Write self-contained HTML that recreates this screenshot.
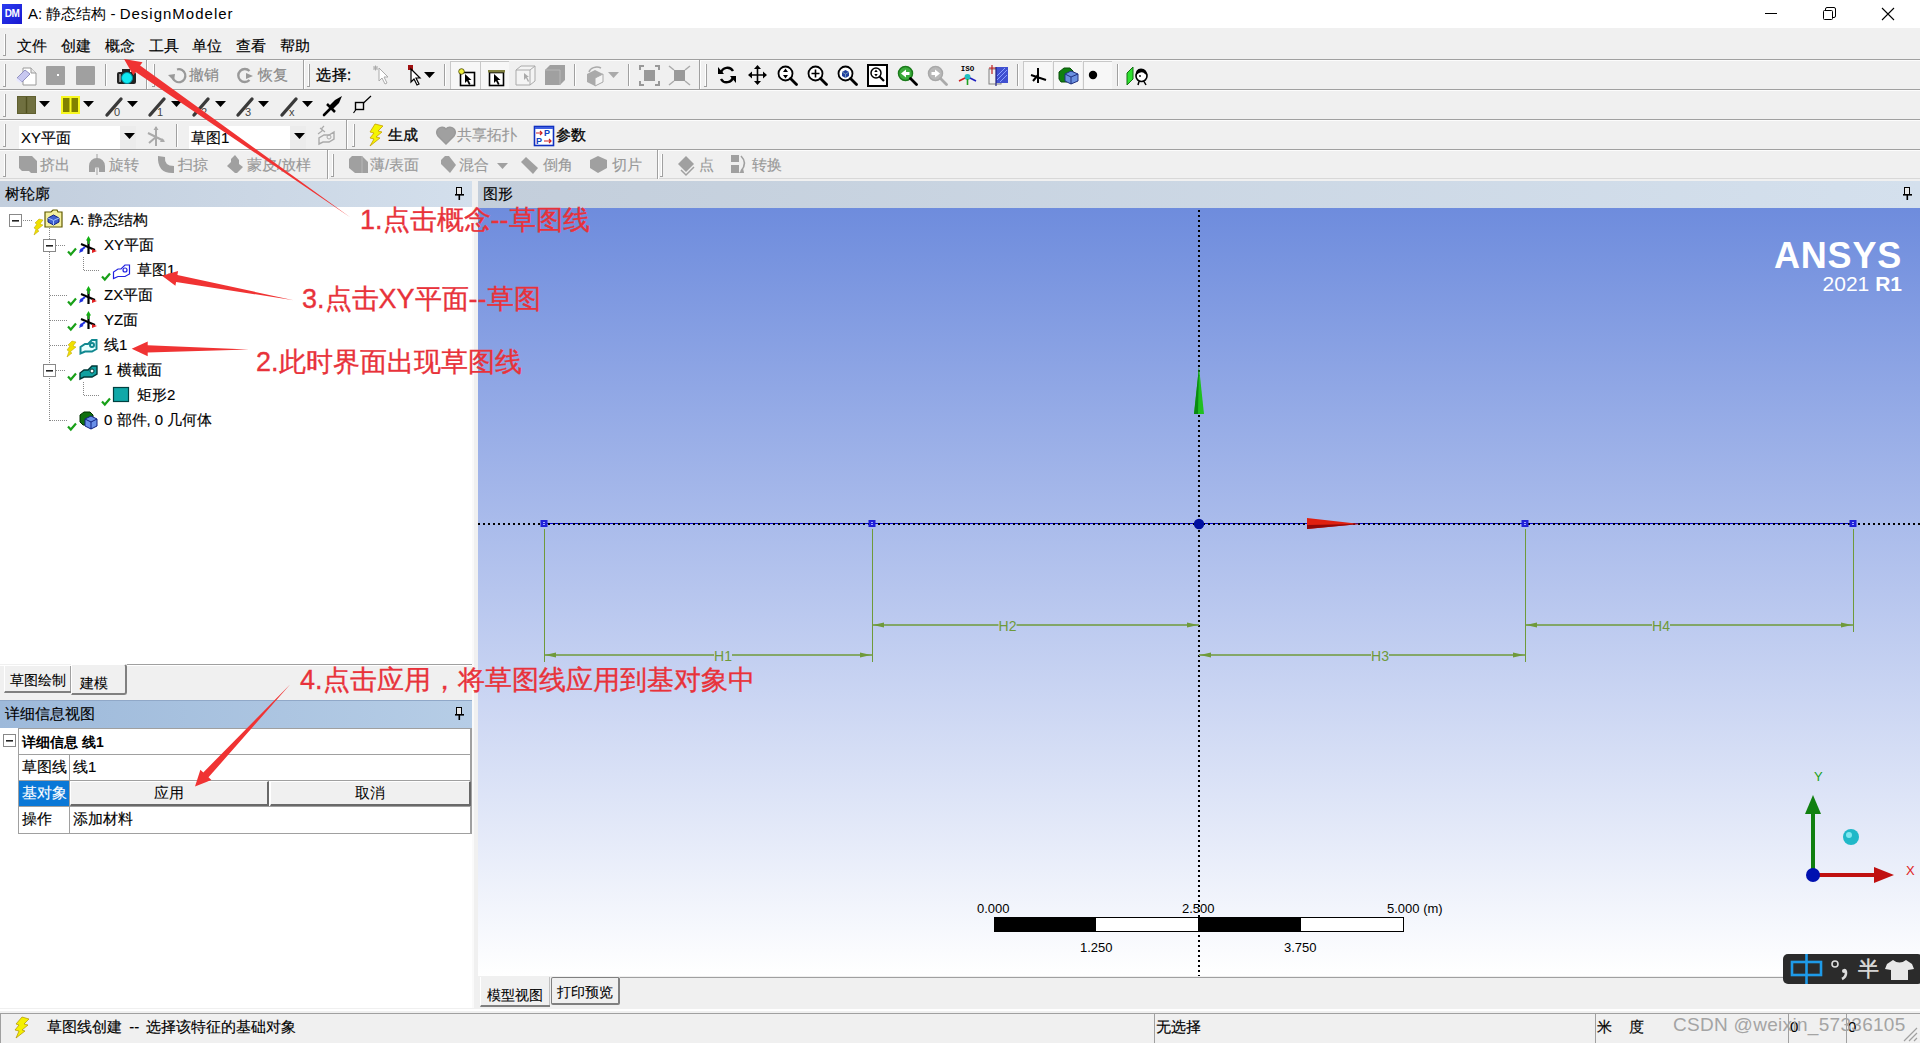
<!DOCTYPE html><html><head><meta charset="utf-8"><style>
html,body{margin:0;padding:0;}
body{width:1920px;height:1043px;position:relative;overflow:hidden;background:#f0f0f0;font-family:'Liberation Sans', sans-serif;}
div{box-sizing:border-box;}
</style></head><body>
<div style="position:absolute;left:0px;top:0px;width:1920px;height:28px;background:#fff"></div>
<div style="position:absolute;left:2px;top:4px;width:20px;height:20px;background:linear-gradient(135deg,#2a3cf0,#1818d0);color:#fff;font-size:10px;font-weight:bold;line-height:20px;text-align:center;letter-spacing:-0.5px">DM</div>
<div style="position:absolute;left:28px;top:4px;font-size:15px;line-height:19px;color:#000;white-space:nowrap;">A: 静态结构 - <span style="letter-spacing:1px">DesignModeler</span></div>
<svg style="position:absolute;left:1750px;top:0" width="170" height="28"><line x1="15" y1="13.5" x2="27" y2="13.5" stroke="#000" stroke-width="1"/><rect x="73.5" y="10.5" width="9" height="9" rx="1" fill="none" stroke="#000"/><path d="M75.5 10.5 V9 a1.5 1.5 0 0 1 1.5-1.5 H84 a1.5 1.5 0 0 1 1.5 1.5 V16 a1.5 1.5 0 0 1-1.5 1.5 H82.5" fill="none" stroke="#000"/><path d="M132 8 L144 20 M144 8 L132 20" stroke="#000" stroke-width="1.1"/></svg>
<div style="position:absolute;left:4px;top:34px;width:1px;height:22px;background:#fff"></div>
<div style="position:absolute;left:5px;top:34px;width:1px;height:22px;background:#a0a0a0"></div>
<div style="position:absolute;left:3px;top:55px;width:3px;height:1px;background:#a0a0a0"></div>
<div style="position:absolute;left:17px;top:36px;font-size:15px;line-height:19px;color:#000;white-space:nowrap;-webkit-text-stroke:0.15px #000;">文件</div>
<div style="position:absolute;left:61px;top:36px;font-size:15px;line-height:19px;color:#000;white-space:nowrap;-webkit-text-stroke:0.15px #000;">创建</div>
<div style="position:absolute;left:105px;top:36px;font-size:15px;line-height:19px;color:#000;white-space:nowrap;-webkit-text-stroke:0.15px #000;">概念</div>
<div style="position:absolute;left:149px;top:36px;font-size:15px;line-height:19px;color:#000;white-space:nowrap;-webkit-text-stroke:0.15px #000;">工具</div>
<div style="position:absolute;left:192px;top:36px;font-size:15px;line-height:19px;color:#000;white-space:nowrap;-webkit-text-stroke:0.15px #000;">单位</div>
<div style="position:absolute;left:236px;top:36px;font-size:15px;line-height:19px;color:#000;white-space:nowrap;-webkit-text-stroke:0.15px #000;">查看</div>
<div style="position:absolute;left:280px;top:36px;font-size:15px;line-height:19px;color:#000;white-space:nowrap;-webkit-text-stroke:0.15px #000;">帮助</div>
<div style="position:absolute;left:0px;top:59px;width:1920px;height:1px;background:#a0a0a0"></div>
<div style="position:absolute;left:0px;top:60px;width:1920px;height:1px;background:#fcfcfc"></div>
<div style="position:absolute;left:0px;top:89px;width:1920px;height:1px;background:#a0a0a0"></div>
<div style="position:absolute;left:0px;top:90px;width:1920px;height:1px;background:#fcfcfc"></div>
<div style="position:absolute;left:0px;top:119px;width:1920px;height:1px;background:#a0a0a0"></div>
<div style="position:absolute;left:0px;top:120px;width:1920px;height:1px;background:#fcfcfc"></div>
<div style="position:absolute;left:0px;top:149px;width:1920px;height:1px;background:#a0a0a0"></div>
<div style="position:absolute;left:0px;top:150px;width:1920px;height:1px;background:#fcfcfc"></div>
<div style="position:absolute;left:0px;top:178px;width:1920px;height:1px;background:#d8d8d8"></div>
<div style="position:absolute;left:0px;top:179px;width:1920px;height:2px;background:#f0f0f0"></div>
<div style="position:absolute;left:4px;top:64px;width:1px;height:23px;background:#fff"></div>
<div style="position:absolute;left:5px;top:64px;width:1px;height:23px;background:#a0a0a0"></div>
<div style="position:absolute;left:3px;top:86px;width:3px;height:1px;background:#a0a0a0"></div>
<svg style="position:absolute;left:16px;top:65px;overflow:visible" width="21" height="21" viewBox="0 0 21 21"><path d="M7 3 H15 L20 8 V20 H7 Z" fill="#fff" stroke="#9a9a9a"/><path d="M15 3 V8 H20" fill="#e8e8e8" stroke="#9a9a9a"/><path d="M1 13 L9 5 L14 9 L6 17 Z" fill="#c8c8f0" stroke="#9090c0"/><path d="M1 13 L6 17 L4 18 L0 15Z" fill="#e8e8ff"/></svg>
<svg style="position:absolute;left:46px;top:66px;overflow:visible" width="20" height="19" viewBox="0 0 20 19"><rect x="0" y="0" width="19" height="19" rx="1" fill="#a0a0a0"/><rect x="11" y="8" width="2" height="2" fill="#fff"/></svg>
<svg style="position:absolute;left:76px;top:66px;overflow:visible" width="20" height="19" viewBox="0 0 20 19"><rect x="0" y="0" width="19" height="19" rx="1" fill="#a0a0a0"/></svg>
<div style="position:absolute;left:105px;top:64px;width:1px;height:22px;background:#a0a0a0"></div>
<div style="position:absolute;left:106px;top:64px;width:1px;height:22px;background:#fff"></div>
<svg style="position:absolute;left:116px;top:68px;overflow:visible" width="21" height="17" viewBox="0 0 21 17"><rect x="1" y="4" width="19" height="12" rx="2" fill="#222"/><rect x="6" y="1" width="8" height="4" fill="#222"/><rect x="3" y="6" width="2" height="8" fill="#888"/><circle cx="11" cy="10" r="5.5" fill="#10e8f0" stroke="#089" stroke-width="1"/></svg>
<div style="position:absolute;left:146px;top:60px;width:1px;height:29px;background:#a0a0a0"></div>
<div style="position:absolute;left:147px;top:60px;width:1px;height:29px;background:#fff"></div>
<div style="position:absolute;left:153px;top:64px;width:1px;height:23px;background:#fff"></div>
<div style="position:absolute;left:154px;top:64px;width:1px;height:23px;background:#a0a0a0"></div>
<div style="position:absolute;left:152px;top:86px;width:3px;height:1px;background:#a0a0a0"></div>
<svg style="position:absolute;left:168px;top:66px;overflow:visible" width="18" height="19" viewBox="0 0 18 19"><path d="M4.5 11 A6.5 6.5 0 1 0 9 3.5" fill="none" stroke="#999" stroke-width="2.2"/><path d="M0 9 L6 15 L7 8 Z" fill="#999"/></svg>
<div style="position:absolute;left:189px;top:65px;font-size:15px;line-height:19px;color:#8a8a8a;white-space:nowrap;-webkit-text-stroke:0.15px #8a8a8a;">撤销</div>
<svg style="position:absolute;left:236px;top:66px;overflow:visible" width="18" height="19" viewBox="0 0 18 19"><path d="M13.5 5 A6.5 6.5 0 1 0 13.5 14" fill="none" stroke="#999" stroke-width="2.4"/><path d="M10 7 L17 10 L10 13 Z" fill="#999"/></svg>
<div style="position:absolute;left:258px;top:65px;font-size:15px;line-height:19px;color:#8a8a8a;white-space:nowrap;-webkit-text-stroke:0.15px #8a8a8a;">恢复</div>
<div style="position:absolute;left:303px;top:60px;width:1px;height:29px;background:#a0a0a0"></div>
<div style="position:absolute;left:304px;top:60px;width:1px;height:29px;background:#fff"></div>
<div style="position:absolute;left:308px;top:64px;width:1px;height:23px;background:#fff"></div>
<div style="position:absolute;left:309px;top:64px;width:1px;height:23px;background:#a0a0a0"></div>
<div style="position:absolute;left:307px;top:86px;width:3px;height:1px;background:#a0a0a0"></div>
<div style="position:absolute;left:316px;top:65px;font-size:15px;line-height:19px;color:#000;white-space:nowrap;-webkit-text-stroke:0.3px #000;letter-spacing:0.5px">选择:</div>
<svg style="position:absolute;left:372px;top:65px;overflow:visible" width="21" height="21" viewBox="0 0 21 21"><path d="M7 3 L7 16 L10 13 L13 19 L15 18 L12 12 L16 12 Z" fill="#fff" stroke="#aaa"/><path d="M1 3 L6 3 M3.5 0.5 L3.5 5.5 M1.5 1 L5.5 5 M5.5 1 L1.5 5" stroke="#aaa"/></svg>
<svg style="position:absolute;left:408px;top:65px;overflow:visible" width="15" height="21" viewBox="0 0 15 21"><rect x="0" y="0" width="5" height="5" fill="#a01010"/><path d="M3 4 L3 17 L6 14 L9 20 L11 19 L8 13 L12 13 Z" fill="#fff" stroke="#000" stroke-width="1.2"/></svg>
<svg style="position:absolute;left:424px;top:72px;overflow:visible" width="11" height="6" viewBox="0 0 11 6"><path d="M0 0 H11 L5.5 6 Z" fill="#000"/></svg>
<div style="position:absolute;left:444px;top:64px;width:1px;height:22px;background:#a0a0a0"></div>
<div style="position:absolute;left:445px;top:64px;width:1px;height:22px;background:#fff"></div>
<div style="position:absolute;left:450px;top:61px;width:30px;height:28px;background:#f7f7f7;border-top:1px solid #c8c8c8;border-left:1px solid #c8c8c8"></div>
<div style="position:absolute;left:480px;top:61px;width:29px;height:28px;background:#f7f7f7;border-top:1px solid #c8c8c8;border-left:1px solid #c8c8c8"></div>
<svg style="position:absolute;left:458px;top:68px;overflow:visible" width="18" height="18" viewBox="0 0 18 18"><rect x="2.5" y="4.5" width="14" height="13" fill="#fff" stroke="#000" stroke-width="1.6"/><circle cx="3.5" cy="3.5" r="2.8" fill="#f0f040" stroke="#404000" stroke-width="0.8"/><path d="M7 6 L7 15 L9 13 L11 17 L12.5 16 L10.5 12 L13.5 12 Z" fill="#000"/></svg>
<svg style="position:absolute;left:487px;top:68px;overflow:visible" width="19" height="18" viewBox="0 0 19 18"><rect x="2.5" y="4.5" width="14" height="13" fill="#fff" stroke="#000" stroke-width="1.6"/><rect x="1" y="2" width="17" height="2.5" fill="#808040"/><path d="M7 6 L7 15 L9 13 L11 17 L12.5 16 L10.5 12 L13.5 12 Z" fill="#000"/></svg>
<svg style="position:absolute;left:515px;top:65px;overflow:visible" width="21" height="21" viewBox="0 0 21 21"><path d="M1 5 L6 1 H20 V16 L15 20 H1 Z" fill="#f4f4f4" stroke="#aaa"/><path d="M1 5 H15 V20 M15 5 L20 1" fill="none" stroke="#aaa"/><path d="M9 8 L9 15 L11 13 L13 17 L14 16 L12 12 L14 12 Z" fill="#aaa"/></svg>
<svg style="position:absolute;left:545px;top:65px;overflow:visible" width="21" height="21" viewBox="0 0 21 21"><path d="M0 5 L5 0 H20 V15 L15 20 H0 Z" fill="#a0a0a0"/><path d="M0 5 H15 V20" fill="none" stroke="#b8b8b8"/></svg>
<div style="position:absolute;left:574px;top:64px;width:1px;height:22px;background:#a0a0a0"></div>
<div style="position:absolute;left:575px;top:64px;width:1px;height:22px;background:#fff"></div>
<svg style="position:absolute;left:585px;top:64px;overflow:visible" width="21" height="22" viewBox="0 0 21 22"><path d="M2 10 L10 6 L18 10 V18 L10 22 L2 18 Z" fill="#aaa"/><path d="M10 14 L18 10 V18 L10 22 Z" fill="#f4f4f4" stroke="#aaa"/><path d="M4 8 A8 6 0 0 1 16 4" fill="none" stroke="#aaa" stroke-width="1.5"/></svg>
<svg style="position:absolute;left:608px;top:72px;overflow:visible" width="11" height="6" viewBox="0 0 11 6"><path d="M0 0 H11 L5.5 6 Z" fill="#aaa"/></svg>
<div style="position:absolute;left:628px;top:64px;width:1px;height:22px;background:#a0a0a0"></div>
<div style="position:absolute;left:629px;top:64px;width:1px;height:22px;background:#fff"></div>
<svg style="position:absolute;left:639px;top:65px;overflow:visible" width="21" height="21" viewBox="0 0 21 21"><rect x="5" y="5" width="11" height="11" fill="#999"/><path d="M1 5 V1 H5 M16 1 H20 V5 M20 16 V20 H16 M5 20 H1 V16" fill="none" stroke="#999" stroke-width="2"/></svg>
<svg style="position:absolute;left:668px;top:65px;overflow:visible" width="23" height="21" viewBox="0 0 23 21"><rect x="6" y="5" width="11" height="11" fill="#999"/><path d="M1 1 L6 5 M22 1 L17 5 M22 20 L17 16 M1 20 L6 16" stroke="#aaa" stroke-width="1.5"/></svg>
<div style="position:absolute;left:699px;top:60px;width:1px;height:29px;background:#a0a0a0"></div>
<div style="position:absolute;left:700px;top:60px;width:1px;height:29px;background:#fff"></div>
<div style="position:absolute;left:705px;top:64px;width:1px;height:23px;background:#fff"></div>
<div style="position:absolute;left:706px;top:64px;width:1px;height:23px;background:#a0a0a0"></div>
<div style="position:absolute;left:704px;top:86px;width:3px;height:1px;background:#a0a0a0"></div>
<svg style="position:absolute;left:718px;top:65px;overflow:visible" width="18" height="20" viewBox="0 0 18 20"><path d="M3 8 A6.5 6.5 0 0 1 15 6" fill="none" stroke="#000" stroke-width="2.4"/><path d="M15 12 A6.5 6.5 0 0 1 3 14" fill="none" stroke="#000" stroke-width="2.4"/><path d="M0 2 L6 9 L0 9 Z" fill="#000"/><path d="M18 18 L12 11 L18 11 Z" fill="#000"/></svg>
<svg style="position:absolute;left:748px;top:65px;overflow:visible" width="19" height="20" viewBox="0 0 19 20"><path d="M9.5 2 V18 M1.5 10 H17.5" stroke="#000" stroke-width="1.6"/><path d="M9.5 0 L6 4 H13 Z M9.5 20 L6 16 H13 Z M0 10 L4 6.5 V13.5 Z M19 10 L15 6.5 V13.5 Z" fill="#000"/></svg>
<svg style="position:absolute;left:777px;top:65px;overflow:visible" width="21" height="21" viewBox="0 0 21 21"><circle cx="8.5" cy="8.5" r="7" fill="#fff" stroke="#000" stroke-width="1.8"/><path d="M8.5 3.5 L6 7 H11 Z M8.5 13.5 L6 10 H11 Z" fill="#000"/><path d="M13.5 13.5 L19.5 19.5" stroke="#000" stroke-width="2.8" stroke-linecap="round"/></svg>
<svg style="position:absolute;left:807px;top:65px;overflow:visible" width="21" height="21" viewBox="0 0 21 21"><circle cx="8.5" cy="8.5" r="7" fill="#fff" stroke="#000" stroke-width="1.8"/><path d="M8.5 4.5 V12.5 M4.5 8.5 H12.5" stroke="#000" stroke-width="1.6"/><path d="M13.5 13.5 L19.5 19.5" stroke="#000" stroke-width="2.8" stroke-linecap="round"/></svg>
<svg style="position:absolute;left:837px;top:65px;overflow:visible" width="21" height="21" viewBox="0 0 21 21"><circle cx="8.5" cy="8.5" r="7" fill="#fff" stroke="#000" stroke-width="1.8"/><path d="M5 7 L8.5 5 L12 7 V11 L8.5 13 L5 11 Z" fill="#2040a0"/><path d="M5 7 L8.5 9 L12 7 M8.5 9 V13" stroke="#8ab" stroke-width="0.8" fill="none"/><path d="M13.5 13.5 L19.5 19.5" stroke="#000" stroke-width="2.8" stroke-linecap="round"/></svg>
<svg style="position:absolute;left:867px;top:64px;overflow:visible" width="21" height="23" viewBox="0 0 21 23"><rect x="1" y="1" width="19" height="21" fill="#fff" stroke="#000" stroke-width="2"/><circle cx="9" cy="9" r="5" fill="none" stroke="#000" stroke-width="1.5"/><path d="M12.5 12.5 L17 17" stroke="#000" stroke-width="2.2"/><path d="M9 5.5 L7.3 8 H10.7 Z M9 12.5 L7.3 10 H10.7Z" fill="#000"/></svg>
<svg style="position:absolute;left:897px;top:65px" width="21" height="21"><circle cx="8.5" cy="8.5" r="7" fill="#3aaa3a" stroke="#1a7a1a" stroke-width="1.5"/><path d="M4 8.5 L9 4.5 V7 H12.5 V10 H9 V12.5 Z" fill="#fff"/><path d="M13.5 13.5 L19.5 19.5" stroke="#000" stroke-width="2.8" stroke-linecap="round"/></svg>
<svg style="position:absolute;left:927px;top:65px" width="21" height="21"><circle cx="8.5" cy="8.5" r="7" fill="#b8b8b8" stroke="#a8a8a8" stroke-width="1.5"/><path d="M13 8.5 L8 4.5 V7 H4.5 V10 H8 V12.5 Z" fill="#fff"/><path d="M13.5 13.5 L19.5 19.5" stroke="#aaa" stroke-width="2.8" stroke-linecap="round"/></svg>
<svg style="position:absolute;left:957px;top:64px;overflow:visible" width="21" height="22" viewBox="0 0 21 22"><text x="10.5" y="7" font-size="7.5" font-weight="bold" text-anchor="middle" font-family="Liberation Mono" fill="#000">ISO</text><circle cx="10.5" cy="13" r="3" fill="#20c0c0"/><path d="M10.5 15 V21" stroke="#20a020" stroke-width="1.6"/><path d="M2 17 L8 14" stroke="#d02020" stroke-width="1.6"/><path d="M13 14 L19 17" stroke="#2020c0" stroke-width="1.6"/></svg>
<svg style="position:absolute;left:988px;top:64px;overflow:visible" width="21" height="22" viewBox="0 0 21 22"><rect x="1" y="5" width="12" height="15" fill="none" stroke="#808080"/><rect x="8" y="3" width="12" height="16" fill="#4050d0"/><path d="M9 16 L19 6 M9 12 L17 4 M12 18 L19 11" stroke="#8aa0ff" stroke-width="1"/><path d="M4 1 V10 M1 4 H8" stroke="#c02020" stroke-width="1.2"/><path d="M8 3 V22" stroke="#202080" stroke-width="1.2"/></svg>
<div style="position:absolute;left:1017px;top:64px;width:1px;height:22px;background:#a0a0a0"></div>
<div style="position:absolute;left:1018px;top:64px;width:1px;height:22px;background:#fff"></div>
<div style="position:absolute;left:1023px;top:61px;width:29px;height:28px;background:#f7f7f7;border-top:1px solid #c8c8c8;border-left:1px solid #c8c8c8"></div>
<div style="position:absolute;left:1053px;top:61px;width:29px;height:28px;background:#f7f7f7;border-top:1px solid #c8c8c8;border-left:1px solid #c8c8c8"></div>
<div style="position:absolute;left:1083px;top:61px;width:29px;height:28px;background:#f7f7f7;border-top:1px solid #c8c8c8;border-left:1px solid #c8c8c8"></div>
<svg style="position:absolute;left:1030px;top:67px;overflow:visible" width="17" height="17" viewBox="0 0 17 17"><path d="M8 1 V16 M1 8 L16 13 M3 14 L8 8" stroke="#000" stroke-width="2"/></svg>
<svg style="position:absolute;left:1058px;top:67px;overflow:visible" width="21" height="17" viewBox="0 0 21 17"><path d="M1 5 L6 1 H12 L15 4 V11 L9 15 H3 L1 12 Z" fill="#108010" stroke="#0a500a"/><path d="M7 7 L13 4 L20 7 V14 L13 17 L7 14 Z" fill="#6a90e0" stroke="#203080"/><path d="M7 7 L13 10 L20 7 M13 10 V17" stroke="#203080" fill="none"/></svg>
<svg style="position:absolute;left:1088px;top:70px;overflow:visible" width="10" height="10" viewBox="0 0 10 10"><circle cx="5" cy="5" r="4.2" fill="#000"/></svg>
<div style="position:absolute;left:1117px;top:64px;width:1px;height:22px;background:#a0a0a0"></div>
<div style="position:absolute;left:1118px;top:64px;width:1px;height:22px;background:#fff"></div>
<svg style="position:absolute;left:1126px;top:66px;overflow:visible" width="24" height="20" viewBox="0 0 24 20"><path d="M1 7 L7 1 V13 L1 19 Z" fill="#30e030" stroke="#107010"/><circle cx="15.5" cy="10" r="5.5" fill="#fff" stroke="#000" stroke-width="1.6"/><path d="M10 9 Q9 3 15 2.5 Q21 2.5 21 9 L19 8 Q17 5 13 7 Z" fill="#000"/><circle cx="14" cy="10" r="0.9" fill="#000"/><path d="M13 15.5 L12 19 M18 15.5 L20 19" stroke="#000" stroke-width="1.5"/></svg>
<div style="position:absolute;left:4px;top:94px;width:1px;height:23px;background:#fff"></div>
<div style="position:absolute;left:5px;top:94px;width:1px;height:23px;background:#a0a0a0"></div>
<div style="position:absolute;left:3px;top:116px;width:3px;height:1px;background:#a0a0a0"></div>
<svg style="position:absolute;left:17px;top:96px;overflow:visible" width="19" height="18" viewBox="0 0 19 18"><rect x="0" y="0" width="19" height="18" fill="#707040"/><path d="M9.5 0 V18" stroke="#505020" stroke-width="1.4"/><rect x="0.5" y="0.5" width="18" height="17" fill="none" stroke="#606030"/></svg>
<svg style="position:absolute;left:39px;top:101px;overflow:visible" width="11" height="6" viewBox="0 0 11 6"><path d="M0 0 H11 L5.5 6 Z" fill="#000"/></svg>
<svg style="position:absolute;left:61px;top:96px;overflow:visible" width="19" height="18" viewBox="0 0 19 18"><rect x="0" y="0" width="19" height="18" fill="#f8f820"/><rect x="2" y="2" width="6.5" height="14" fill="#808000"/><rect x="10.5" y="2" width="6.5" height="14" fill="#808000"/></svg>
<svg style="position:absolute;left:83px;top:101px;overflow:visible" width="11" height="6" viewBox="0 0 11 6"><path d="M0 0 H11 L5.5 6 Z" fill="#000"/></svg>
<svg style="position:absolute;left:105px;top:95px;overflow:visible" width="20" height="22" viewBox="0 0 20 22"><path d="M2 20 L16 4" stroke="#3a3a3a" stroke-width="3.4" stroke-linecap="round"/><text x="9" y="21" font-size="11" font-family="Liberation Sans" fill="#444">0</text></svg>
<svg style="position:absolute;left:127px;top:101px;overflow:visible" width="11" height="6" viewBox="0 0 11 6"><path d="M0 0 H11 L5.5 6 Z" fill="#000"/></svg>
<svg style="position:absolute;left:148px;top:95px;overflow:visible" width="20" height="22" viewBox="0 0 20 22"><path d="M2 20 L16 4" stroke="#3a3a3a" stroke-width="3.4" stroke-linecap="round"/><text x="9" y="21" font-size="11" font-family="Liberation Sans" fill="#444">1</text></svg>
<svg style="position:absolute;left:171px;top:101px;overflow:visible" width="11" height="6" viewBox="0 0 11 6"><path d="M0 0 H11 L5.5 6 Z" fill="#000"/></svg>
<svg style="position:absolute;left:192px;top:95px;overflow:visible" width="20" height="22" viewBox="0 0 20 22"><path d="M2 20 L16 4" stroke="#3a3a3a" stroke-width="3.4" stroke-linecap="round"/><text x="9" y="21" font-size="11" font-family="Liberation Sans" fill="#444">2</text></svg>
<svg style="position:absolute;left:215px;top:101px;overflow:visible" width="11" height="6" viewBox="0 0 11 6"><path d="M0 0 H11 L5.5 6 Z" fill="#000"/></svg>
<svg style="position:absolute;left:236px;top:95px;overflow:visible" width="20" height="22" viewBox="0 0 20 22"><path d="M2 20 L16 4" stroke="#3a3a3a" stroke-width="3.4" stroke-linecap="round"/><text x="9" y="21" font-size="11" font-family="Liberation Sans" fill="#444">3</text></svg>
<svg style="position:absolute;left:258px;top:101px;overflow:visible" width="11" height="6" viewBox="0 0 11 6"><path d="M0 0 H11 L5.5 6 Z" fill="#000"/></svg>
<svg style="position:absolute;left:280px;top:95px;overflow:visible" width="20" height="22" viewBox="0 0 20 22"><path d="M2 20 L16 4" stroke="#3a3a3a" stroke-width="3.4" stroke-linecap="round"/><text x="9" y="21" font-size="11" font-family="Liberation Sans" fill="#444">x</text></svg>
<svg style="position:absolute;left:302px;top:101px;overflow:visible" width="11" height="6" viewBox="0 0 11 6"><path d="M0 0 H11 L5.5 6 Z" fill="#000"/></svg>
<svg style="position:absolute;left:323px;top:95px;overflow:visible" width="21" height="21" viewBox="0 0 21 21"><path d="M1 20 L10 11" stroke="#000" stroke-width="2.6" stroke-linecap="round"/><path d="M6 11 L12 5 L19 1 L16 8 L10 14 Z" fill="#000"/><path d="M4 9 L12 17" stroke="#000" stroke-width="2.5"/></svg>
<svg style="position:absolute;left:353px;top:95px;overflow:visible" width="19" height="19" viewBox="0 0 19 19"><rect x="2.5" y="7.5" width="8" height="7" fill="none" stroke="#000" stroke-width="1.4"/><path d="M0.5 18 L3 14.5 M10.5 8 L18 1" stroke="#000" stroke-width="1.2"/></svg>
<div style="position:absolute;left:4px;top:124px;width:1px;height:23px;background:#fff"></div>
<div style="position:absolute;left:5px;top:124px;width:1px;height:23px;background:#a0a0a0"></div>
<div style="position:absolute;left:3px;top:146px;width:3px;height:1px;background:#a0a0a0"></div>
<div style="position:absolute;left:19px;top:126px;width:101px;height:23px;background:#fff"></div>
<div style="position:absolute;left:120px;top:126px;width:16px;height:23px;background:#ececec"></div>
<div style="position:absolute;left:21px;top:127px;font-size:15px;line-height:21px;color:#000;white-space:nowrap;-webkit-text-stroke:0.15px #000;">XY平面</div>
<svg style="position:absolute;left:124px;top:133px;overflow:visible" width="11" height="6" viewBox="0 0 11 6"><path d="M0 0 H11 L5.5 6 Z" fill="#000"/></svg>
<svg style="position:absolute;left:146px;top:126px;overflow:visible" width="21" height="21" viewBox="0 0 21 21"><path d="M10 1 V20 M2 7 L18 15 M3 17 L10 11" stroke="#aaa" stroke-width="2"/><path d="M10 0 L7.5 4 H12.5 Z M19 16 L14 16 L16 12 Z" fill="#aaa"/></svg>
<div style="position:absolute;left:176px;top:124px;width:1px;height:23px;background:#a0a0a0"></div>
<div style="position:absolute;left:177px;top:124px;width:1px;height:23px;background:#fff"></div>
<div style="position:absolute;left:189px;top:126px;width:101px;height:23px;background:#fff"></div>
<div style="position:absolute;left:290px;top:126px;width:16px;height:23px;background:#ececec"></div>
<div style="position:absolute;left:191px;top:127px;font-size:15px;line-height:21px;color:#000;white-space:nowrap;-webkit-text-stroke:0.15px #000;">草图1</div>
<svg style="position:absolute;left:294px;top:133px;overflow:visible" width="11" height="6" viewBox="0 0 11 6"><path d="M0 0 H11 L5.5 6 Z" fill="#000"/></svg>
<svg style="position:absolute;left:317px;top:125px;overflow:visible" width="19" height="21" viewBox="0 0 19 21"><path d="M1 9 L5 6 V3 L7 1 M3 3 L8 7" stroke="#aaa" stroke-width="1.2" fill="none"/><path d="M2 19 L2 13 L7 10 H12 L17 7 V14 L12 17 H6 Z" fill="none" stroke="#aaa" stroke-width="1.4"/><circle cx="12" cy="12" r="2" fill="none" stroke="#aaa"/></svg>
<div style="position:absolute;left:346px;top:120px;width:1px;height:29px;background:#a0a0a0"></div>
<div style="position:absolute;left:347px;top:120px;width:1px;height:29px;background:#fff"></div>
<div style="position:absolute;left:353px;top:124px;width:1px;height:23px;background:#fff"></div>
<div style="position:absolute;left:354px;top:124px;width:1px;height:23px;background:#a0a0a0"></div>
<div style="position:absolute;left:352px;top:146px;width:3px;height:1px;background:#a0a0a0"></div>
<svg style="position:absolute;left:369px;top:124px;overflow:visible" width="15" height="22" viewBox="0 0 15 22"><path d="M6 0 L14 2 L9 7 L13 8 L7 13 L11 14 L1 22 L5 15 L1 14 L5 9 L1 8 Z" fill="#f4f400" stroke="#c8a000" stroke-width="0.8"/></svg>
<div style="position:absolute;left:388px;top:125px;font-size:15px;line-height:19px;color:#000;white-space:nowrap;-webkit-text-stroke:0.3px #000;">生成</div>
<svg style="position:absolute;left:436px;top:126px;overflow:visible" width="20" height="19" viewBox="0 0 20 19"><path d="M10 18 L2 10 A5 5 0 0 1 10 3 A5 5 0 0 1 18 10 Z" fill="#a0a0a0" stroke="#999" stroke-width="1.5"/></svg>
<div style="position:absolute;left:457px;top:125px;font-size:15px;line-height:19px;color:#999;white-space:nowrap;-webkit-text-stroke:0.15px #999;">共享拓扑</div>
<svg style="position:absolute;left:534px;top:126px;overflow:visible" width="20" height="20" viewBox="0 0 20 20"><rect x="0.5" y="0.5" width="19" height="19" fill="#fff" stroke="#1030c0" stroke-width="1.6"/><rect x="1" y="1" width="18" height="2" fill="#4060e0"/><text x="10" y="10" font-size="9" font-weight="bold" font-family="Liberation Sans" fill="#1040c0">P</text><text x="2" y="18" font-size="9" font-weight="bold" font-family="Liberation Sans" fill="#1040c0">P</text><path d="M2 7 H8 M6 5 L8 7 L6 9 M10 15 H17 M15 13 L17 15 L15 17" stroke="#d02020" stroke-width="1.2" fill="none"/></svg>
<div style="position:absolute;left:556px;top:125px;font-size:15px;line-height:19px;color:#000;white-space:nowrap;-webkit-text-stroke:0.3px #000;">参数</div>
<div style="position:absolute;left:4px;top:154px;width:1px;height:23px;background:#fff"></div>
<div style="position:absolute;left:5px;top:154px;width:1px;height:23px;background:#a0a0a0"></div>
<div style="position:absolute;left:3px;top:176px;width:3px;height:1px;background:#a0a0a0"></div>
<svg style="position:absolute;left:19px;top:155px;overflow:visible" width="19" height="19" viewBox="0 0 19 19"><path d="M0 1 H13 L18 6 V18 H12 L10 16 L3 16 L0 13 Z" fill="#a0a0a0"/></svg>
<div style="position:absolute;left:40px;top:155px;font-size:15px;line-height:19px;color:#999;white-space:nowrap;-webkit-text-stroke:0.15px #999;">挤出</div>
<svg style="position:absolute;left:88px;top:154px;overflow:visible" width="19" height="21" viewBox="0 0 19 21"><path d="M1 18 V12 A8 8 0 0 1 17 12 V18 H11 V15 A2 2 0 0 0 7 15 V18 Z" fill="#a0a0a0"/><path d="M9 0 V21" stroke="#a0a0a0" stroke-width="1"/></svg>
<div style="position:absolute;left:109px;top:155px;font-size:15px;line-height:19px;color:#999;white-space:nowrap;-webkit-text-stroke:0.15px #999;">旋转</div>
<svg style="position:absolute;left:156px;top:155px;overflow:visible" width="19" height="19" viewBox="0 0 19 19"><path d="M2 1 L9 2 Q8 11 18 11 L18 18 Q1 19 2 1 Z" fill="#a0a0a0"/></svg>
<div style="position:absolute;left:178px;top:155px;font-size:15px;line-height:19px;color:#999;white-space:nowrap;-webkit-text-stroke:0.15px #999;">扫掠</div>
<svg style="position:absolute;left:226px;top:155px;overflow:visible" width="18" height="19" viewBox="0 0 18 19"><path d="M9 0 L13 5 V9 L17 12 L11 18 L9 18 L1 11 L5 7 V4 Z" fill="#a0a0a0"/></svg>
<div style="position:absolute;left:247px;top:155px;font-size:15px;line-height:19px;color:#999;white-space:nowrap;-webkit-text-stroke:0.15px #999;">蒙皮/放样</div>
<div style="position:absolute;left:327px;top:150px;width:1px;height:29px;background:#a0a0a0"></div>
<div style="position:absolute;left:328px;top:150px;width:1px;height:29px;background:#fff"></div>
<div style="position:absolute;left:332px;top:154px;width:1px;height:23px;background:#fff"></div>
<div style="position:absolute;left:333px;top:154px;width:1px;height:23px;background:#a0a0a0"></div>
<div style="position:absolute;left:331px;top:176px;width:3px;height:1px;background:#a0a0a0"></div>
<svg style="position:absolute;left:349px;top:156px;overflow:visible" width="20" height="18" viewBox="0 0 20 18"><path d="M0 3 L3 0 H13 L19 6 V17 H6 L0 12 Z" fill="#a0a0a0"/><path d="M13 0 V17" stroke="#b8b8b8"/></svg>
<div style="position:absolute;left:370px;top:155px;font-size:15px;line-height:19px;color:#999;white-space:nowrap;-webkit-text-stroke:0.15px #999;">薄/表面</div>
<svg style="position:absolute;left:440px;top:156px;overflow:visible" width="17" height="18" viewBox="0 0 17 18"><path d="M1 4 L5 0 H9 L16 9 L10 17 L1 8 Z" fill="#a0a0a0"/></svg>
<div style="position:absolute;left:459px;top:155px;font-size:15px;line-height:19px;color:#999;white-space:nowrap;-webkit-text-stroke:0.15px #999;">混合</div>
<svg style="position:absolute;left:497px;top:163px;overflow:visible" width="11" height="6" viewBox="0 0 11 6"><path d="M0 0 H11 L5.5 6 Z" fill="#a0a0a0"/></svg>
<svg style="position:absolute;left:521px;top:157px;overflow:visible" width="18" height="17" viewBox="0 0 18 17"><path d="M0 5 L5 0 L17 11 L12 17 Z" fill="#a0a0a0"/></svg>
<div style="position:absolute;left:543px;top:155px;font-size:15px;line-height:19px;color:#999;white-space:nowrap;-webkit-text-stroke:0.15px #999;">倒角</div>
<svg style="position:absolute;left:589px;top:156px;overflow:visible" width="19" height="17" viewBox="0 0 19 17"><path d="M1 4 L9 0 L18 4 V12 L9 17 L1 12 Z" fill="#a0a0a0"/></svg>
<div style="position:absolute;left:612px;top:155px;font-size:15px;line-height:19px;color:#999;white-space:nowrap;-webkit-text-stroke:0.15px #999;">切片</div>
<div style="position:absolute;left:657px;top:150px;width:1px;height:29px;background:#a0a0a0"></div>
<div style="position:absolute;left:658px;top:150px;width:1px;height:29px;background:#fff"></div>
<div style="position:absolute;left:661px;top:154px;width:1px;height:23px;background:#fff"></div>
<div style="position:absolute;left:662px;top:154px;width:1px;height:23px;background:#a0a0a0"></div>
<div style="position:absolute;left:660px;top:176px;width:3px;height:1px;background:#a0a0a0"></div>
<svg style="position:absolute;left:677px;top:155px;overflow:visible" width="18" height="20" viewBox="0 0 18 20"><path d="M1 9 L9 1 L17 9 L9 17 Z" fill="#a0a0a0"/><path d="M4 15 L9 20 L17 12" stroke="#a0a0a0" stroke-width="1.5" fill="none"/></svg>
<div style="position:absolute;left:699px;top:155px;font-size:15px;line-height:19px;color:#999;white-space:nowrap;-webkit-text-stroke:0.15px #999;">点</div>
<svg style="position:absolute;left:731px;top:155px;overflow:visible" width="19" height="19" viewBox="0 0 19 19"><rect x="0" y="0" width="8" height="7" fill="#a0a0a0"/><rect x="0" y="10" width="8" height="8" fill="#a0a0a0"/><path d="M10 1 Q17 8 10 16" stroke="#a0a0a0" stroke-width="1.6" fill="none"/><path d="M8 18 L12 13 L13 18 Z" fill="#a0a0a0"/></svg>
<div style="position:absolute;left:752px;top:155px;font-size:15px;line-height:19px;color:#999;white-space:nowrap;-webkit-text-stroke:0.15px #999;">转换</div>
<div style="position:absolute;left:0px;top:181px;width:472px;height:26px;background:linear-gradient(90deg,#c2cedd,#d3dfec)"></div>
<div style="position:absolute;left:5px;top:184px;font-size:15px;line-height:20px;color:#000;white-space:nowrap;-webkit-text-stroke:0.15px #000;">树轮廓</div>
<svg style="position:absolute;left:455px;top:187px;overflow:visible" width="9" height="13" viewBox="0 0 9 13"><rect x="1.5" y="0.5" width="5" height="7" fill="#e8e8e8" stroke="#000"/><rect x="0" y="7" width="9" height="1.6" fill="#000"/><rect x="3.5" y="8" width="1.6" height="5" fill="#000"/></svg>
<div style="position:absolute;left:0px;top:207px;width:472px;height:457px;background:#fff"></div>
<svg style="position:absolute;left:9px;top:214px;overflow:visible" width="13" height="13" viewBox="0 0 13 13"><rect x="0.5" y="0.5" width="12" height="12" fill="#fff" stroke="#888"/><rect x="3" y="6" width="7" height="1.6" fill="#222"/></svg>
<svg style="position:absolute;left:23px;top:220px" width="10" height="1"><line x1="0" y1="0.5" x2="10" y2="0.5" stroke="#888" stroke-dasharray="1 1"/></svg>
<svg style="position:absolute;left:34px;top:219px;overflow:visible" width="10" height="16" viewBox="0 0 10 16"><path d="M5 0 L9 1 L6 5 L9 6 L3 11 L5 12 L0 16 L2 10 L0 9 L3 5 L1 4 Z" fill="#f0e000" stroke="#b8a000" stroke-width="0.5"/></svg>
<svg style="position:absolute;left:44px;top:208px;overflow:visible" width="19" height="20" viewBox="0 0 19 20"><path d="M1 4 H7 L9 2 H13 L14 4 H18 V19 H1 Z" fill="#f4f0a0" stroke="#605a00" stroke-width="1.2"/><path d="M4 10 L9.5 7 L15 10 V14 L9.5 17 L4 14 Z" fill="#4060d0" stroke="#102080"/><path d="M4 10 L9.5 12.5 L15 10 M9.5 12.5 V17" stroke="#a0c0ff" fill="none"/></svg>
<div style="position:absolute;left:70px;top:210px;font-size:15px;line-height:20px;color:#000;white-space:nowrap;-webkit-text-stroke:0.15px #000;">A: 静态结构</div>
<svg style="position:absolute;left:49px;top:228px" width="1" height="193"><line x1="0.5" y1="0" x2="0.5" y2="193" stroke="#888" stroke-dasharray="1 1"/></svg>
<svg style="position:absolute;left:43px;top:239px;overflow:visible" width="13" height="13" viewBox="0 0 13 13"><rect x="0.5" y="0.5" width="12" height="12" fill="#fff" stroke="#888"/><rect x="3" y="6" width="7" height="1.6" fill="#222"/></svg>
<svg style="position:absolute;left:56px;top:245px" width="10" height="1"><line x1="0" y1="0.5" x2="10" y2="0.5" stroke="#888" stroke-dasharray="1 1"/></svg>
<svg style="position:absolute;left:67px;top:247px;overflow:visible" width="10" height="9" viewBox="0 0 10 9"><path d="M1 4.5 L3.8 7.5 L9 1.5" stroke="#18a018" stroke-width="2.2" fill="none"/></svg>
<svg style="position:absolute;left:79px;top:236px;overflow:visible" width="19" height="19" viewBox="0 0 19 19"><path d="M9.5 3 V18" stroke="#000" stroke-width="2.2"/><path d="M2 8 L16 14" stroke="#000" stroke-width="2"/><path d="M9.5 0 L7 4.5 H12 Z" fill="#10b010"/><path d="M9.5 4 V8" stroke="#10b010" stroke-width="1.6"/><path d="M1 15 L6 11" stroke="#2030e0" stroke-width="2"/><path d="M0 17 L2 12 L4.5 15 Z" fill="#2030e0"/><path d="M13 13 L18 15 L13 17 Z" fill="#e02020"/></svg>
<div style="position:absolute;left:104px;top:235px;font-size:15px;line-height:20px;color:#000;white-space:nowrap;-webkit-text-stroke:0.15px #000;">XY平面</div>
<svg style="position:absolute;left:83px;top:257px" width="1" height="13"><line x1="0.5" y1="0" x2="0.5" y2="13" stroke="#888" stroke-dasharray="1 1"/></svg>
<svg style="position:absolute;left:84px;top:270px" width="16" height="1"><line x1="0" y1="0.5" x2="16" y2="0.5" stroke="#888" stroke-dasharray="1 1"/></svg>
<svg style="position:absolute;left:101px;top:272px;overflow:visible" width="10" height="9" viewBox="0 0 10 9"><path d="M1 4.5 L3.8 7.5 L9 1.5" stroke="#18a018" stroke-width="2.2" fill="none"/></svg>
<svg style="position:absolute;left:112px;top:261px;overflow:visible" width="19" height="19" viewBox="0 0 19 19"><path d="M1.5 17.5 V11 L6 8 H9 L13 4 H17.5 V13 L13 15.5 H6 Z" fill="none" stroke="#2020e0" stroke-width="1.2"/><circle cx="13" cy="9" r="2" fill="none" stroke="#2020e0" stroke-width="1.2"/></svg>
<div style="position:absolute;left:137px;top:260px;font-size:15px;line-height:20px;color:#000;white-space:nowrap;-webkit-text-stroke:0.15px #000;">草图1</div>
<svg style="position:absolute;left:50px;top:295px" width="17" height="1"><line x1="0" y1="0.5" x2="17" y2="0.5" stroke="#888" stroke-dasharray="1 1"/></svg>
<svg style="position:absolute;left:67px;top:297px;overflow:visible" width="10" height="9" viewBox="0 0 10 9"><path d="M1 4.5 L3.8 7.5 L9 1.5" stroke="#18a018" stroke-width="2.2" fill="none"/></svg>
<svg style="position:absolute;left:79px;top:286px;overflow:visible" width="19" height="19" viewBox="0 0 19 19"><path d="M9.5 3 V18" stroke="#000" stroke-width="2.2"/><path d="M2 8 L16 14" stroke="#000" stroke-width="2"/><path d="M9.5 0 L7 4.5 H12 Z" fill="#10b010"/><path d="M9.5 4 V8" stroke="#10b010" stroke-width="1.6"/><path d="M1 15 L6 11" stroke="#2030e0" stroke-width="2"/><path d="M0 17 L2 12 L4.5 15 Z" fill="#2030e0"/><path d="M13 13 L18 15 L13 17 Z" fill="#e02020"/></svg>
<div style="position:absolute;left:104px;top:285px;font-size:15px;line-height:20px;color:#000;white-space:nowrap;-webkit-text-stroke:0.15px #000;">ZX平面</div>
<svg style="position:absolute;left:50px;top:320px" width="17" height="1"><line x1="0" y1="0.5" x2="17" y2="0.5" stroke="#888" stroke-dasharray="1 1"/></svg>
<svg style="position:absolute;left:67px;top:322px;overflow:visible" width="10" height="9" viewBox="0 0 10 9"><path d="M1 4.5 L3.8 7.5 L9 1.5" stroke="#18a018" stroke-width="2.2" fill="none"/></svg>
<svg style="position:absolute;left:79px;top:311px;overflow:visible" width="19" height="19" viewBox="0 0 19 19"><path d="M9.5 3 V18" stroke="#000" stroke-width="2.2"/><path d="M2 8 L16 14" stroke="#000" stroke-width="2"/><path d="M9.5 0 L7 4.5 H12 Z" fill="#10b010"/><path d="M9.5 4 V8" stroke="#10b010" stroke-width="1.6"/><path d="M1 15 L6 11" stroke="#2030e0" stroke-width="2"/><path d="M0 17 L2 12 L4.5 15 Z" fill="#2030e0"/><path d="M13 13 L18 15 L13 17 Z" fill="#e02020"/></svg>
<div style="position:absolute;left:104px;top:310px;font-size:15px;line-height:20px;color:#000;white-space:nowrap;-webkit-text-stroke:0.15px #000;">YZ面</div>
<svg style="position:absolute;left:50px;top:345px" width="17" height="1"><line x1="0" y1="0.5" x2="17" y2="0.5" stroke="#888" stroke-dasharray="1 1"/></svg>
<svg style="position:absolute;left:67px;top:341px;overflow:visible" width="10" height="16" viewBox="0 0 10 16"><path d="M5 0 L9 1 L6 5 L9 6 L3 11 L5 12 L0 16 L2 10 L0 9 L3 5 L1 4 Z" fill="#f0e000" stroke="#b8a000" stroke-width="0.5"/></svg>
<svg style="position:absolute;left:79px;top:336px;overflow:visible" width="19" height="19" viewBox="0 0 19 19"><path d="M1.5 17.5 V11 L6 8 H9 L13 4 H17.5 V13 L13 15.5 H6 Z" fill="#e8ffff" stroke="#108890" stroke-width="2.0"/><circle cx="13" cy="9" r="2" fill="none" stroke="#108890" stroke-width="2.0"/></svg>
<div style="position:absolute;left:104px;top:335px;font-size:15px;line-height:20px;color:#000;white-space:nowrap;-webkit-text-stroke:0.15px #000;">线1</div>
<svg style="position:absolute;left:43px;top:364px;overflow:visible" width="13" height="13" viewBox="0 0 13 13"><rect x="0.5" y="0.5" width="12" height="12" fill="#fff" stroke="#888"/><rect x="3" y="6" width="7" height="1.6" fill="#222"/></svg>
<svg style="position:absolute;left:56px;top:370px" width="10" height="1"><line x1="0" y1="0.5" x2="10" y2="0.5" stroke="#888" stroke-dasharray="1 1"/></svg>
<svg style="position:absolute;left:67px;top:372px;overflow:visible" width="10" height="9" viewBox="0 0 10 9"><path d="M1 4.5 L3.8 7.5 L9 1.5" stroke="#18a018" stroke-width="2.2" fill="none"/></svg>
<svg style="position:absolute;left:79px;top:361px;overflow:visible" width="19" height="19" viewBox="0 0 19 19"><path d="M1 18 V12 L5 9 H9 L13 5 H18 V13 L13 16 H5 Z" fill="#10a0a0" stroke="#003838" stroke-width="1.4"/><circle cx="13" cy="10" r="2" fill="#fff" stroke="#003838"/></svg>
<div style="position:absolute;left:104px;top:360px;font-size:15px;line-height:20px;color:#000;white-space:nowrap;-webkit-text-stroke:0.15px #000;">1 横截面</div>
<svg style="position:absolute;left:83px;top:382px" width="1" height="13"><line x1="0.5" y1="0" x2="0.5" y2="13" stroke="#888" stroke-dasharray="1 1"/></svg>
<svg style="position:absolute;left:84px;top:395px" width="16" height="1"><line x1="0" y1="0.5" x2="16" y2="0.5" stroke="#888" stroke-dasharray="1 1"/></svg>
<svg style="position:absolute;left:101px;top:397px;overflow:visible" width="10" height="9" viewBox="0 0 10 9"><path d="M1 4.5 L3.8 7.5 L9 1.5" stroke="#18a018" stroke-width="2.2" fill="none"/></svg>
<svg style="position:absolute;left:113px;top:387px;overflow:visible" width="16" height="15" viewBox="0 0 16 15"><rect x="0.5" y="0.5" width="15" height="14" fill="#10a8a8" stroke="#004040" stroke-width="1.2"/></svg>
<div style="position:absolute;left:137px;top:385px;font-size:15px;line-height:20px;color:#000;white-space:nowrap;-webkit-text-stroke:0.15px #000;">矩形2</div>
<svg style="position:absolute;left:50px;top:420px" width="17" height="1"><line x1="0" y1="0.5" x2="17" y2="0.5" stroke="#888" stroke-dasharray="1 1"/></svg>
<svg style="position:absolute;left:67px;top:422px;overflow:visible" width="10" height="9" viewBox="0 0 10 9"><path d="M1 4.5 L3.8 7.5 L9 1.5" stroke="#18a018" stroke-width="2.2" fill="none"/></svg>
<svg style="position:absolute;left:79px;top:411px;overflow:visible" width="19" height="18" viewBox="0 0 19 18"><path d="M1 4 L5 1 H11 L14 4 V11 L10 14 H4 L1 11 Z" fill="#107010" stroke="#003000"/><path d="M6 8 L12 5 L18 8 V15 L12 18 L6 15 Z" fill="#6a90e8" stroke="#102080"/><path d="M6 8 L12 11 L18 8 M12 11 V18" stroke="#102080" fill="none"/></svg>
<div style="position:absolute;left:104px;top:410px;font-size:15px;line-height:20px;color:#000;white-space:nowrap;-webkit-text-stroke:0.15px #000;">0 部件, 0 几何体</div>
<div style="position:absolute;left:0px;top:664px;width:472px;height:36px;background:#f0f0f0"></div>
<div style="position:absolute;left:0px;top:665px;width:472px;height:1px;background:#fff"></div>
<div style="position:absolute;left:4px;top:665px;width:67px;height:28px;background:#f0f0f0;border-top:1px solid #fff;border-left:1px solid #fff;border-bottom:2px solid #808080;box-shadow:inset -1px 0 #a0a0a0"></div>
<div style="position:absolute;left:10px;top:670px;font-size:14px;line-height:20px;color:#000;white-space:nowrap;-webkit-text-stroke:0.1px #000;">草图绘制</div>
<div style="position:absolute;left:71px;top:664px;width:56px;height:31px;background:#f0f0f0;border-top:1px solid #fff;border-left:1px solid #fff;border-right:2px solid #808080;border-bottom:2px solid #808080;border-radius:0 3px 3px 0"></div>
<div style="position:absolute;left:80px;top:673px;font-size:14px;line-height:20px;color:#000;white-space:nowrap;-webkit-text-stroke:0.1px #000;">建模</div>
<div style="position:absolute;left:127px;top:664px;width:345px;height:1px;background:#a0a0a0"></div>
<div style="position:absolute;left:127px;top:665px;width:345px;height:1px;background:#fff"></div>
<div style="position:absolute;left:0px;top:700px;width:472px;height:28px;background:linear-gradient(90deg,#9db9da,#b6cde6);border-top:1px solid #90a8c8"></div>
<div style="position:absolute;left:5px;top:704px;font-size:15px;line-height:20px;color:#000;white-space:nowrap;-webkit-text-stroke:0.15px #000;">详细信息视图</div>
<svg style="position:absolute;left:455px;top:707px;overflow:visible" width="9" height="13" viewBox="0 0 9 13"><rect x="1.5" y="0.5" width="5" height="7" fill="#e8e8e8" stroke="#000"/><rect x="0" y="7" width="9" height="1.6" fill="#000"/><rect x="3.5" y="8" width="1.6" height="5" fill="#000"/></svg>
<div style="position:absolute;left:0px;top:728px;width:472px;height:280px;background:#fff"></div>
<div style="position:absolute;left:18px;top:728px;width:454px;height:106px;border:1px solid #a0a0a0;border-right:2px solid #a0a0a0"></div>
<div style="position:absolute;left:18px;top:754px;width:454px;height:1px;background:#a0a0a0"></div>
<div style="position:absolute;left:18px;top:780px;width:454px;height:1px;background:#a0a0a0"></div>
<div style="position:absolute;left:18px;top:806px;width:454px;height:1px;background:#a0a0a0"></div>
<div style="position:absolute;left:69px;top:754px;width:1px;height:79px;background:#a0a0a0"></div>
<svg style="position:absolute;left:3px;top:734px;overflow:visible" width="13" height="13" viewBox="0 0 13 13"><rect x="0.5" y="0.5" width="12" height="12" fill="#fff" stroke="#888"/><rect x="3" y="6" width="7" height="1.6" fill="#222"/></svg>
<div style="position:absolute;left:22px;top:732px;font-size:14px;line-height:20px;color:#000;white-space:nowrap;font-weight:bold">详细信息 线1</div>
<div style="position:absolute;left:22px;top:757px;font-size:15px;line-height:20px;color:#000;white-space:nowrap;-webkit-text-stroke:0.15px #000;">草图线</div>
<div style="position:absolute;left:73px;top:757px;font-size:15px;line-height:20px;color:#000;white-space:nowrap;-webkit-text-stroke:0.15px #000;">线1</div>
<div style="position:absolute;left:19px;top:781px;width:50px;height:25px;background:#0a78d7"></div>
<div style="position:absolute;left:22px;top:783px;font-size:15px;line-height:20px;color:#fff;white-space:nowrap;-webkit-text-stroke:0.15px #fff;">基对象</div>
<div style="position:absolute;left:70px;top:781px;width:199px;height:25px;background:#f0f0f0;border-top:1px solid #fff;border-left:1px solid #fff;border-right:2px solid #696969;border-bottom:2px solid #696969;font-size:15px;line-height:21px;text-align:center;color:#000">应用</div>
<div style="position:absolute;left:270px;top:781px;width:201px;height:25px;background:#f0f0f0;border-top:1px solid #fff;border-left:1px solid #fff;border-right:2px solid #696969;border-bottom:2px solid #696969;font-size:15px;line-height:21px;text-align:center;color:#000">取消</div>
<div style="position:absolute;left:22px;top:809px;font-size:15px;line-height:20px;color:#000;white-space:nowrap;-webkit-text-stroke:0.15px #000;">操作</div>
<div style="position:absolute;left:73px;top:809px;font-size:15px;line-height:20px;color:#000;white-space:nowrap;-webkit-text-stroke:0.15px #000;">添加材料</div>
<div style="position:absolute;left:472px;top:181px;width:6px;height:827px;background:#f0f0f0"></div>
<div style="position:absolute;left:472px;top:207px;width:2px;height:801px;background:#fafafa"></div>
<div style="position:absolute;left:478px;top:181px;width:1442px;height:27px;background:linear-gradient(90deg,#c3cedb,#d4e0ed)"></div>
<div style="position:absolute;left:483px;top:184px;font-size:15px;line-height:20px;color:#000;white-space:nowrap;-webkit-text-stroke:0.15px #000;">图形</div>
<svg style="position:absolute;left:1903px;top:187px;overflow:visible" width="9" height="13" viewBox="0 0 9 13"><rect x="1.5" y="0.5" width="5" height="7" fill="#e8e8e8" stroke="#000"/><rect x="0" y="7" width="9" height="1.6" fill="#000"/><rect x="3.5" y="8" width="1.6" height="5" fill="#000"/></svg>
<div style="position:absolute;left:478px;top:208px;width:1442px;height:768px;background:linear-gradient(180deg,#6e8cdd 0%,#ffffff 100%)"></div>
<svg style="position:absolute;left:478px;top:208px" width="1442" height="768"><line x1="66" y1="315.5" x2="1375" y2="315.5" stroke="#0000d0" stroke-width="1"/><line x1="0" y1="316" x2="1442" y2="316" stroke="#000" stroke-width="2" stroke-dasharray="2 3"/><line x1="721" y1="2" x2="721" y2="768" stroke="#000" stroke-width="2" stroke-dasharray="2 3"/><rect x="62.5" y="312" width="7" height="7" fill="#2020d8"/><rect x="65" y="314" width="2" height="1" fill="#a0a8ff"/><rect x="65" y="316" width="2" height="1" fill="#a0a8ff"/><rect x="390.5" y="312" width="7" height="7" fill="#2020d8"/><rect x="393" y="314" width="2" height="1" fill="#a0a8ff"/><rect x="393" y="316" width="2" height="1" fill="#a0a8ff"/><rect x="1043.5" y="312" width="7" height="7" fill="#2020d8"/><rect x="1046" y="314" width="2" height="1" fill="#a0a8ff"/><rect x="1046" y="316" width="2" height="1" fill="#a0a8ff"/><rect x="1371.5" y="312" width="7" height="7" fill="#2020d8"/><rect x="1374" y="314" width="2" height="1" fill="#a0a8ff"/><rect x="1374" y="316" width="2" height="1" fill="#a0a8ff"/><line x1="66.5" y1="321" x2="66.5" y2="454" stroke="#6f9a3a" stroke-width="1"/><line x1="394.5" y1="321" x2="394.5" y2="454" stroke="#6f9a3a" stroke-width="1"/><line x1="1047.5" y1="321" x2="1047.5" y2="454" stroke="#6f9a3a" stroke-width="1"/><line x1="1375.5" y1="321" x2="1375.5" y2="424" stroke="#6f9a3a" stroke-width="1"/><line x1="66" y1="447" x2="236" y2="447" stroke="#6f9a3a" stroke-width="1.3"/><line x1="254" y1="447" x2="394" y2="447" stroke="#6f9a3a" stroke-width="1.3"/><path d="M67 447 L78 444.5 L78 449.5 Z" fill="#6f9a3a"/><path d="M393 447 L382 444.5 L382 449.5 Z" fill="#6f9a3a"/><text x="245" y="453" font-size="14" font-family="Liberation Sans" fill="#6f9a3a" text-anchor="middle">H1</text><line x1="394" y1="417" x2="520.5" y2="417" stroke="#6f9a3a" stroke-width="1.3"/><line x1="538.5" y1="417" x2="721" y2="417" stroke="#6f9a3a" stroke-width="1.3"/><path d="M395 417 L406 414.5 L406 419.5 Z" fill="#6f9a3a"/><path d="M720 417 L709 414.5 L709 419.5 Z" fill="#6f9a3a"/><text x="529.5" y="423" font-size="14" font-family="Liberation Sans" fill="#6f9a3a" text-anchor="middle">H2</text><line x1="721" y1="447" x2="893" y2="447" stroke="#6f9a3a" stroke-width="1.3"/><line x1="911" y1="447" x2="1047" y2="447" stroke="#6f9a3a" stroke-width="1.3"/><path d="M722 447 L733 444.5 L733 449.5 Z" fill="#6f9a3a"/><path d="M1046 447 L1035 444.5 L1035 449.5 Z" fill="#6f9a3a"/><text x="902" y="453" font-size="14" font-family="Liberation Sans" fill="#6f9a3a" text-anchor="middle">H3</text><line x1="1047" y1="417" x2="1174" y2="417" stroke="#6f9a3a" stroke-width="1.3"/><line x1="1192" y1="417" x2="1375" y2="417" stroke="#6f9a3a" stroke-width="1.3"/><path d="M1048 417 L1059 414.5 L1059 419.5 Z" fill="#6f9a3a"/><path d="M1374 417 L1363 414.5 L1363 419.5 Z" fill="#6f9a3a"/><text x="1183" y="423" font-size="14" font-family="Liberation Sans" fill="#6f9a3a" text-anchor="middle">H4</text><path d="M721 159 L716 206 L726 206 Z" fill="#20c020"/><path d="M721 159 L716 206 L720 206 Z" fill="#0a8a10"/><path d="M882 316 L829 310 L829 321 Z" fill="#e02010"/><path d="M882 316 L829 317 L829 321 Z" fill="#900808"/><circle cx="721" cy="316" r="5.2" fill="#0010a0"/><text x="1424" y="60" font-size="36" font-weight="bold" font-family="Liberation Sans" fill="#fff" text-anchor="end" letter-spacing="0.8">ANSYS</text><text x="1424" y="83" font-size="21" font-family="Liberation Sans" fill="#fff" text-anchor="end"><tspan>2021 </tspan><tspan font-weight="bold">R1</tspan></text><rect x="516.5" y="709.5" width="409" height="14" fill="#fff" stroke="#000"/><rect x="516" y="709" width="102" height="15" fill="#000"/><rect x="720" y="709" width="103" height="15" fill="#000"/><text x="499" y="705" font-size="13" font-family="Liberation Sans" fill="#000">0.000</text><text x="704" y="705" font-size="13" font-family="Liberation Sans" fill="#000">2.500</text><text x="909" y="705" font-size="13" font-family="Liberation Sans" fill="#000">5.000 (m)</text><text x="602" y="744" font-size="13" font-family="Liberation Sans" fill="#000">1.250</text><text x="806" y="744" font-size="13" font-family="Liberation Sans" fill="#000">3.750</text><line x1="1335" y1="667" x2="1335" y2="605" stroke="#108010" stroke-width="4"/><path d="M1335 587 L1327 606 L1343 606 Z" fill="#108010"/><line x1="1335" y1="667" x2="1398" y2="667" stroke="#c01010" stroke-width="4"/><path d="M1416 667 L1396 659 L1396 675 Z" fill="#c01010"/><circle cx="1335" cy="667" r="7" fill="#0010b0"/><circle cx="1373" cy="629" r="8" fill="#20b8c8"/><circle cx="1371" cy="627" r="3" fill="#80e8f0"/><text x="1336" y="573" font-size="13" font-family="Liberation Sans" fill="#20a020">Y</text><text x="1428" y="667" font-size="13" font-family="Liberation Sans" fill="#e02020">X</text></svg>
<div style="position:absolute;left:478px;top:976px;width:1442px;height:32px;background:#f0f0f0"></div>
<div style="position:absolute;left:620px;top:977px;width:1300px;height:1px;background:#a0a0a0"></div>
<div style="position:absolute;left:480px;top:977px;width:70px;height:30px;background:#f0f0f0;border-left:1px solid #fff;border-bottom:2px solid #808080;box-shadow:inset -1px 0 #c0c0c0"></div>
<div style="position:absolute;left:487px;top:985px;font-size:14px;line-height:20px;color:#000;white-space:nowrap;-webkit-text-stroke:0.1px #000;">模型视图</div>
<div style="position:absolute;left:551px;top:977px;width:69px;height:28px;background:#f0f0f0;border-top:1px solid #808080;border-left:1px solid #808080;border-right:2px solid #808080;border-bottom:2px solid #808080;border-radius:2px"></div>
<div style="position:absolute;left:557px;top:982px;font-size:14px;line-height:20px;color:#000;white-space:nowrap;-webkit-text-stroke:0.1px #000;">打印预览</div>
<div style="position:absolute;left:1783px;top:954px;width:140px;height:30px;background:#2b2b2b;border-radius:5px"></div>
<svg style="position:absolute;left:1790px;top:954px;overflow:visible" width="34" height="30" viewBox="0 0 34 30"><rect x="2" y="8" width="29" height="13" fill="none" stroke="#1e9ae8" stroke-width="2.6"/><path d="M16.5 0 V30" stroke="#1e9ae8" stroke-width="2.6"/></svg>
<svg style="position:absolute;left:1830px;top:958px;overflow:visible" width="24" height="24" viewBox="0 0 24 24"><circle cx="5" cy="6" r="3" fill="none" stroke="#ddd" stroke-width="1.6"/><path d="M14 12 Q16 12 16 15 Q16 19 12 21" stroke="#ddd" stroke-width="2.6" fill="none"/><circle cx="14" cy="13" r="2" fill="#ddd"/></svg>
<div style="position:absolute;left:1858px;top:955px;font-size:21px;line-height:28px;color:#ddd;white-space:nowrap;-webkit-text-stroke:0.5px #ddd;">半</div>
<svg style="position:absolute;left:1885px;top:959px;overflow:visible" width="30" height="22" viewBox="0 0 30 22"><path d="M8 1 L2 5 L0 10 L6 11 V21 H23 V11 L29 10 L27 5 L21 1 Q14.5 6 8 1 Z" fill="#e8e8e8"/></svg>
<div style="position:absolute;left:0px;top:1008px;width:1920px;height:35px;background:#f0f0f0"></div>
<div style="position:absolute;left:0px;top:1009px;width:1920px;height:2px;background:#fff"></div>
<div style="position:absolute;left:0px;top:1013px;width:1920px;height:1px;background:#a0a0a0"></div>
<div style="position:absolute;left:0px;top:1013px;width:1150px;height:30px;border-left:1px solid #a0a0a0;border-top:1px solid #a0a0a0"></div>
<div style="position:absolute;left:1154px;top:1013px;width:438px;height:30px;border-left:1px solid #a0a0a0;border-top:1px solid #a0a0a0"></div>
<div style="position:absolute;left:1595px;top:1013px;width:191px;height:30px;border-left:1px solid #a0a0a0;border-top:1px solid #a0a0a0"></div>
<div style="position:absolute;left:1788px;top:1013px;width:56px;height:30px;border-left:1px solid #a0a0a0;border-top:1px solid #a0a0a0"></div>
<div style="position:absolute;left:1846px;top:1013px;width:54px;height:30px;border-left:1px solid #a0a0a0;border-top:1px solid #a0a0a0"></div>
<svg style="position:absolute;left:15px;top:1017px;overflow:visible" width="15" height="21" viewBox="0 0 15 21"><path d="M7 0 L14 2 L9 7 L13 8 L7 13 L10 14 L1 21 L4 14 L0 13 L4 8 L1 7 Z" fill="#f4f000" stroke="#b09000" stroke-width="0.7"/></svg>
<div style="position:absolute;left:47px;top:1017px;font-size:15px;line-height:20px;color:#000;white-space:nowrap;-webkit-text-stroke:0.15px #000;word-spacing:3px">草图线创建 -- 选择该特征的基础对象</div>
<div style="position:absolute;left:1156px;top:1017px;font-size:15px;line-height:20px;color:#000;white-space:nowrap;-webkit-text-stroke:0.15px #000;">无选择</div>
<div style="position:absolute;left:1597px;top:1017px;font-size:15px;line-height:20px;color:#000;white-space:nowrap;-webkit-text-stroke:0.15px #000;">米&nbsp;&nbsp;&nbsp;&nbsp;度</div>
<div style="position:absolute;left:1790px;top:1017px;font-size:15px;line-height:20px;color:#000;white-space:nowrap;-webkit-text-stroke:0.15px #000;">0</div>
<div style="position:absolute;left:1848px;top:1017px;font-size:15px;line-height:20px;color:#000;white-space:nowrap;-webkit-text-stroke:0.15px #000;">0</div>
<svg style="position:absolute;left:1902px;top:1026px;overflow:visible" width="16" height="16" viewBox="0 0 16 16"><path d="M15 2 L2 15 M15 7 L7 15 M15 12 L12 15" stroke="#a0a0a0" stroke-width="1.2"/></svg>
<div style="position:absolute;left:1673px;top:1013px;font-size:19px;line-height:24px;color:#a4a4a4;white-space:nowrap;letter-spacing:0.3px">CSDN @weixin_57336105</div>
<svg style="position:absolute;left:0;top:0" width="1920" height="1043"><polygon points="124.0,59.0 133.3,75.3 135.7,71.9 350.5,217.5 140.1,65.6 142.5,62.2" fill="#f03333"/><polygon points="162.0,275.7 175.4,285.8 176.1,282.0 293.7,300.3 177.4,274.9 178.1,271.1" fill="#f03333"/><polygon points="131.7,348.8 147.7,356.2 147.7,352.5 248.9,349.4 147.7,345.3 147.7,341.6" fill="#f03333"/><polygon points="195.0,786.6 211.4,780.0 208.5,777.3 290.3,684.3 203.3,772.4 200.4,769.8" fill="#f03333"/></svg>
<div style="position:absolute;left:360px;top:203px;font-size:27px;line-height:34px;color:#e8323a;-webkit-text-stroke:0.35px #e8323a;white-space:nowrap">1.点击概念--草图线</div>
<div style="position:absolute;left:302px;top:282px;font-size:27px;line-height:34px;color:#e8323a;-webkit-text-stroke:0.35px #e8323a;white-space:nowrap">3.点击XY平面--草图</div>
<div style="position:absolute;left:256px;top:345px;font-size:27px;line-height:34px;color:#e8323a;-webkit-text-stroke:0.35px #e8323a;white-space:nowrap">2.此时界面出现草图线</div>
<div style="position:absolute;left:300px;top:663px;font-size:27px;line-height:34px;color:#e8323a;-webkit-text-stroke:0.35px #e8323a;white-space:nowrap">4.点击应用，将草图线应用到基对象中</div>
</body></html>
